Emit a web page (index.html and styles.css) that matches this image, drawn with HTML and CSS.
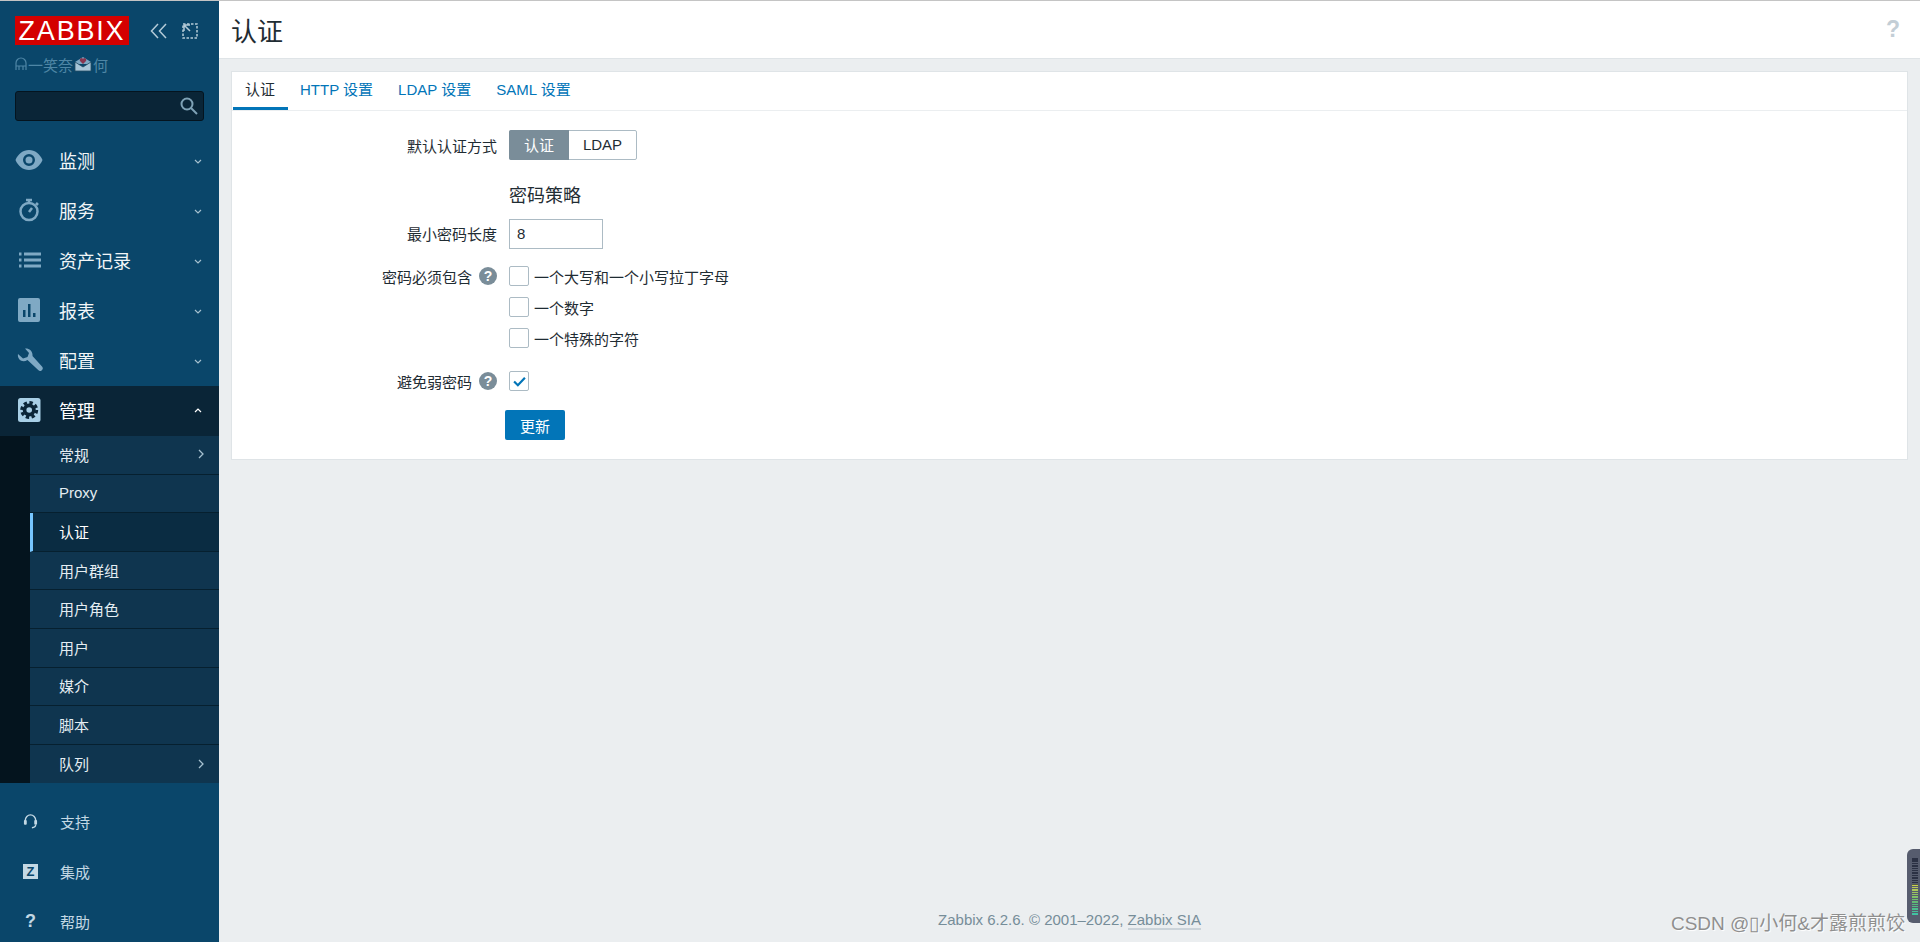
FILE: index.html
```html
<!DOCTYPE html>
<html lang="zh">

<head>
    <meta charset="utf-8">
    <title>认证</title>
    <link rel="stylesheet" href="styles.css">
</head>

<body>
    <div class="page">
        <aside class="sidebar">
            <div class="brand">
                <div class="logo">ZABBIX</div>
                <div class="brand-tools">
                    <svg class="tool" viewBox="0 0 18 16"><path d="M8 1 1.500 8 8 15M16 1 9.500 8 16 15" /></svg>
                    <svg class="tool" viewBox="0 0 16 16"><path class="dash" d="M1 1h14v14H1z" /><path class="solid" d="M2 2h6M2 2v6M2 2l6 6" /></svg>
                </div>
            </div>
            <div class="user">
                <svg class="user-mark" viewBox="0 0 12 14"><path d="M1 13V6a5 5 0 0 1 10 0v7M1 9h10M4 9v4M8 9v4" /></svg>一笑奈<svg class="user-mail" viewBox="0 0 18 16"><path class="flap" d="M1 6 9 1l8 5v2H1z" /><path class="body" d="M1 6l8 5 8-5v9H1z" /><path class="heart" d="M9 8 6 5a1.800 1.800 0 0 1 3-2 1.800 1.800 0 0 1 3 2z" /></svg>何
            </div>
            <div class="search">
                <svg class="search-icon" viewBox="0 0 18 18"><circle cx="7" cy="7" r="5.500" /><path d="M11 11l6 6" /></svg>
            </div>

            <nav class="menu">
                <a class="menu-item">
                    <svg class="menu-icon" viewBox="0 0 28 20"><path class="fill" fill-rule="evenodd" d="M14 0C8 0 3 4 .5 10 3 16 8 20 14 20s11-4 13.500-10C25 4 20 0 14 0zm0 4a6 6 0 1 1 0 12 6 6 0 0 1 0-12z" /><circle class="fill" cx="14" cy="10" r="3.500" /></svg>
                    <span>监测</span>
                    <svg class="chev" viewBox="0 0 8 6"><path d="M1 1l3 3 3-3" /></svg>
                </a>
                <a class="menu-item">
                    <svg class="menu-icon" viewBox="0 0 28 24"><circle class="line" cx="14" cy="13.500" r="8.500" /><path class="line" d="M11 2h6M14 2v3M21 5l2 2" /><path class="line" d="M14 14l3-4" /></svg>
                    <span>服务</span>
                    <svg class="chev" viewBox="0 0 8 6"><path d="M1 1l3 3 3-3" /></svg>
                </a>
                <a class="menu-item">
                    <svg class="menu-icon" viewBox="0 0 28 20"><path class="line thick" d="M4 4h2.500M9 4h17M4 10h2.500M9 10h17M4 16h2.500M9 16h17" /></svg>
                    <span>资产记录</span>
                    <svg class="chev" viewBox="0 0 8 6"><path d="M1 1l3 3 3-3" /></svg>
                </a>
                <a class="menu-item">
                    <svg class="menu-icon" viewBox="0 0 28 24"><path class="fill" fill-rule="evenodd" d="M5 0h18a2 2 0 0 1 2 2v20a2 2 0 0 1-2 2H5a2 2 0 0 1-2-2V2a2 2 0 0 1 2-2zm3 12v7h2.500v-7zm5-6v13h2.500V6zm5 9v4h2.500v-4z" /></svg>
                    <span>报表</span>
                    <svg class="chev" viewBox="0 0 8 6"><path d="M1 1l3 3 3-3" /></svg>
                </a>
                <a class="menu-item">
                    <svg class="menu-icon" viewBox="0 0 28 24"><path class="fill" d="M10 .5C14 0 18 3 17.500 8L27 18.500a2.500 2.500 0 0 1-3.800 3.500L12.500 12C7 15.500 2 11 3 6L8 10.500 12.500 9 14 5z" /></svg>
                    <span>配置</span>
                    <svg class="chev" viewBox="0 0 8 6"><path d="M1 1l3 3 3-3" /></svg>
                </a>
                <a class="menu-item is-open">
                    <svg class="menu-icon" viewBox="0 0 28 24"><rect class="fill" x="3" y="0" width="22.500" height="24" rx="2.500" /><circle class="gear" cx="14.200" cy="12" r="6.500" /><circle class="gear-teeth" cx="14.200" cy="12" r="7.500" /><circle class="fill" cx="14.200" cy="12" r="2.800" /></svg>
                    <span>管理</span>
                    <svg class="chev" viewBox="0 0 8 6"><path d="M1 5l3-3 3 3" /></svg>
                </a>
                <div class="submenu">
                    <ul class="sub-list">
                        <li class="sub-item"><span>常规</span><svg class="chev-side" viewBox="0 0 6 10"><path d="M1 1l4 4-4 4" /></svg></li>
                        <li class="sub-item">Proxy</li>
                        <li class="sub-item is-active">认证</li>
                        <li class="sub-item">用户群组</li>
                        <li class="sub-item">用户角色</li>
                        <li class="sub-item">用户</li>
                        <li class="sub-item">媒介</li>
                        <li class="sub-item">脚本</li>
                        <li class="sub-item"><span>队列</span><svg class="chev-side" viewBox="0 0 6 10"><path d="M1 1l4 4-4 4" /></svg></li>
                    </ul>
                </div>
            </nav>

            <div class="bottom-menu">
                <a class="bottom-item">
                    <svg class="bottom-icon" viewBox="0 0 16 18"><path d="M2.500 11V8a5.500 5.500 0 0 1 11 0v3" /><rect class="pad" x="1" y="8" width="3" height="5" rx="1" /><rect class="pad" x="12" y="8" width="3" height="5" rx="1" /><path d="M13.500 13c0 2-1.500 3-4 3.200" /></svg>
                    <span>支持</span>
                </a>
                <a class="bottom-item">
                    <span class="z-mark">Z</span>
                    <span>集成</span>
                </a>
                <a class="bottom-item">
                    <span class="help-mark">?</span>
                    <span>帮助</span>
                </a>
            </div>
        </aside>

        <main class="main">
            <header class="header">
                <h1 class="title">认证</h1>
                <span class="header-help">?</span>
            </header>

            <div class="content">
                <section class="card">
                    <div class="tabs">
                        <a class="tab is-current">认证</a>
                        <a class="tab">HTTP 设置</a>
                        <a class="tab">LDAP 设置</a>
                        <a class="tab">SAML 设置</a>
                    </div>

                    <form class="form">
                        <div class="row row-auth">
                            <label class="row-label">默认认证方式</label>
                            <div class="segmented">
                                <span class="seg seg-on">认证</span>
                                <span class="seg">LDAP</span>
                            </div>
                        </div>

                        <div class="row row-heading">
                            <div class="row-label"></div>
                            <h4 class="form-heading">密码策略</h4>
                        </div>

                        <div class="row row-length">
                            <label class="row-label">最小密码长度</label>
                            <div class="text-input">8</div>
                        </div>

                        <div class="row row-contains">
                            <label class="row-label">密码必须包含<span class="hint">?</span></label>
                            <div class="checks">
                                <div class="check"><span class="box"></span>一个大写和一个小写拉丁字母</div>
                                <div class="check"><span class="box"></span>一个数字</div>
                                <div class="check"><span class="box"></span>一个特殊的字符</div>
                            </div>
                        </div>

                        <div class="row row-weak">
                            <label class="row-label">避免弱密码<span class="hint">?</span></label>
                            <span class="box"><svg class="tick" viewBox="0 0 12 10"><path d="M1 5l3.500 3.500L11 1.500" /></svg></span>
                        </div>

                        <div class="row row-submit">
                            <div class="row-label"></div>
                            <button class="btn" type="button">更新</button>
                        </div>
                    </form>
                </section>
            </div>

            <footer class="footer">Zabbix 6.2.6. © 2001–2022, <a class="footer-link">Zabbix SIA</a></footer>
        </main>
    </div>

    <div class="meter"></div>
    <div class="watermark">CSDN @▯小何&amp;才露煎煎饺</div>
</body>

</html>
```

FILE: styles.css
```css
* {
    box-sizing: border-box;
}
html,
body {
    margin: 0;
    height: 100%;
    overflow: hidden;
}
body {
    font: 15px "Liberation Sans", "Noto Sans CJK SC", sans-serif;
    color: #1f2c33;
    background: #ebeef0;
}
.page {
    display: flex;
    height: 942px;
    border-top: 1px solid #c4c4c4;
}

/* sidebar */
.sidebar {
    display: flex;
    flex-direction: column;
    flex: none;
    width: 219px;
    overflow: hidden;
    background: #0a466a;
    color: #f2f6f8;
}
.sidebar > * {
    flex: none;
}
.brand {
    display: flex;
    align-items: center;
    padding: 15px 0 0 15px;
}
.logo {
    width: 114px;
    height: 29px;
    background: #d40000;
    color: #fff;
    font-size: 27px;
    line-height: 30px;
    letter-spacing: 1.800px;
    text-align: center;
}
.brand-tools {
    display: flex;
    gap: 13px;
    margin-left: 21px;
}
.tool {
    width: 18px;
    height: 16px;
    fill: none;
    stroke: #b4cbd8;
    stroke-width: 1.500;
}
.tool .dash {
    stroke-dasharray: 2.500 1.500;
}
.user {
    display: flex;
    align-items: center;
    height: 24px;
    margin-top: 7px;
    padding-left: 15px;
    color: #4f86a6;
}
.user-mark {
    width: 12px;
    height: 14px;
    margin-right: 1px;
    fill: none;
    stroke: #4f86a6;
    stroke-width: 1.200;
}
.user-mail {
    width: 18px;
    height: 16px;
    margin: 0 1px;
}
.user-mail .flap {
    fill: #7fa9c4;
}
.user-mail .body {
    fill: #a9c6d8;
    stroke: #234b63;
    stroke-width: .8;
}
.user-mail .heart {
    fill: #8a3650;
}
.search {
    position: relative;
    height: 30px;
    margin: 15px 15px 0;
    background: #0a2537;
    border: 1px solid #04141f;
    border-radius: 3px;
}
.search-icon {
    position: absolute;
    top: 5px;
    right: 5px;
    width: 18px;
    height: 18px;
    fill: none;
    stroke: #7fa2b6;
    stroke-width: 2;
}
.menu {
    display: flex;
    flex-direction: column;
    margin-top: 15px;
}
.menu-item {
    display: flex;
    align-items: center;
    flex: none;
    height: 50px;
    padding: 0 0 2px 15px;
    font-size: 18px;
}
.menu-item span {
    flex: 1;
    margin-left: 16px;
}
.menu-icon {
    flex: none;
    width: 28px;
    height: 24px;
}
.menu-icon .fill {
    fill: #7fa9c4;
}
.menu-icon .line {
    fill: none;
    stroke: #7fa9c4;
    stroke-width: 2.500;
}
.menu-icon .thick {
    stroke-width: 3;
}
.chev {
    flex: none;
    width: 8px;
    height: 6px;
    margin: 3px 17px 0 0;
    fill: none;
    stroke: #a5c0cf;
    stroke-width: 1.200;
}
.menu-item.is-open {
    background: #0a2537;
    color: #fff;
}
.is-open .menu-icon .fill {
    fill: #a8cfe6;
}
.is-open .menu-icon .gear {
    fill: #0a2537;
}
.is-open .menu-icon .gear-teeth {
    fill: none;
    stroke: #0a2537;
    stroke-width: 3;
    stroke-dasharray: 3.400 2.490;
}
.is-open .chev {
    stroke: #fff;
    margin-top: 0;
}
.submenu {
    padding-left: 30px;
    background: #04141e;
}
.sub-list {
    margin: 0;
    padding: 0;
    list-style: none;
}
.sub-item {
    display: flex;
    align-items: center;
    justify-content: space-between;
    height: 38.600px;
    padding: 0 15px 1px 29px;
    background: #0f354f;
    border-bottom: 1px solid #06202f;
    color: #e4edf2;
}
.sub-item:last-child {
    border-bottom: 0;
}
.sub-item.is-active {
    padding-left: 26px;
    background: #0a2c42;
    border-left: 3px solid #76c6ff;
    color: #fff;
}
.chev-side {
    width: 6px;
    height: 10px;
    fill: none;
    stroke: #a5c0cf;
    stroke-width: 1.300;
}
.bottom-menu {
    display: flex;
    flex-direction: column;
    margin-top: 13px;
}
.bottom-item {
    display: flex;
    align-items: center;
    flex: none;
    height: 50px;
    padding-left: 23px;
    color: #c3d8e4;
}
.bottom-item > span:last-child {
    margin-left: 15px;
}
.bottom-icon {
    width: 15px;
    height: 18px;
    margin-right: 7px;
    fill: none;
    stroke: #c3d8e4;
    stroke-width: 1.500;
}
.bottom-icon .pad {
    fill: #c3d8e4;
    stroke: none;
}
.z-mark,
.help-mark {
    flex: none;
    width: 15px;
    margin-right: 7px;
    text-align: center;
    font-weight: bold;
}
.z-mark {
    height: 15px;
    background: #c3d8e4;
    color: #0a466a;
    font-size: 13px;
    line-height: 15px;
}
.help-mark {
    font-size: 18px;
}

/* main */
.main {
    display: flex;
    flex-direction: column;
    flex: 1;
    min-width: 0;
}
.header {
    display: flex;
    align-items: center;
    justify-content: space-between;
    flex: none;
    height: 58px;
    padding: 0 20px 0 12px;
    background: #fff;
    border-bottom: 1px solid #dfe4e7;
}
.title {
    margin: 0;
    font-size: 26px;
    font-weight: normal;
}
.header-help {
    color: #c3ced6;
    font-size: 23px;
    font-weight: bold;
}
.content {
    flex: 1;
    padding: 12px 12px 0;
}
.card {
    height: 389px;
    background: #fff;
    border: 1px solid #dfe4e7;
}
.tabs {
    display: flex;
    height: 39px;
    padding-left: .5px;
    border-bottom: 1px solid #ebeef0;
}
.tab {
    height: 38px;
    padding: 0 12.500px;
    color: #0275b8;
    line-height: 36px;
}
.tab.is-current {
    color: #1f2c33;
    border-bottom: 3px solid #0275b8;
}

/* form */
.form {
    display: flex;
    flex-direction: column;
}
.row {
    display: flex;
    align-items: flex-start;
    gap: 12px;
}
.row-label {
    display: flex;
    align-items: center;
    justify-content: flex-end;
    flex: none;
    width: 265px;
    height: 20px;
}
.row-auth {
    margin-top: 19px;
}
.row-auth .row-label {
    height: 30px;
}
.row-heading {
    margin-top: 24px;
}
.row-length {
    margin-top: 11px;
}
.row-length .row-label {
    height: 29px;
}
.row-contains {
    margin-top: 17px;
}
.row-weak {
    margin-top: 23px;
}
.row-submit {
    margin-top: 19px;
}
.segmented {
    display: flex;
    height: 30px;
    border: 1px solid #acbbc4;
    border-radius: 2px;
}
.seg {
    width: 67px;
    padding-top: 5px;
    text-align: center;
}
.seg-on {
    width: 60px;
    margin: -1px 0 -1px -1px;
    padding-top: 4px;
    background: #7a8d99;
    border-radius: 2px 0 0 2px;
    color: #fff;
}
.form-heading {
    margin: 0;
    font-size: 18px;
    font-weight: normal;
    line-height: 24px;
}
.text-input {
    width: 94px;
    height: 30px;
    padding: 5px 7px;
    border: 1px solid #acbbc4;
}
.hint {
    width: 18px;
    height: 18px;
    margin-left: 7px;
    background: #7a8d99;
    border-radius: 50%;
    color: #fff;
    font-size: 14px;
    font-weight: bold;
    line-height: 18px;
    text-align: center;
}
.checks {
    display: flex;
    flex-direction: column;
    gap: 11px;
}
.check {
    display: flex;
    align-items: center;
    gap: 5px;
    height: 20px;
}
.box {
    display: flex;
    align-items: center;
    justify-content: center;
    flex: none;
    width: 20px;
    height: 20px;
    background: #fff;
    border: 1px solid #acbbc4;
    border-radius: 2px;
}
.tick {
    width: 13px;
    height: 11px;
    fill: none;
    stroke: #0275b8;
    stroke-width: 2;
}
.btn {
    width: 60px;
    height: 30px;
    margin-left: -4px;
    padding: 0;
    background: #0275b8;
    border: 0;
    border-radius: 2px;
    color: #fff;
    font: inherit;
}
.footer {
    flex: none;
    height: 31px;
    color: #768d99;
    text-align: center;
}
.footer-link {
    border-bottom: 2px solid #cbd3d9;
}

/* browser overlays */
.meter {
    position: absolute;
    top: 849px;
    right: 0;
    width: 13px;
    height: 74px;
    background:
        repeating-linear-gradient(transparent 0 1.500px, #565c6e 1.500px 2.400px) 5px 9px / 6px 57px no-repeat,
        linear-gradient(#2b3144 46%, #c9cf4e 48%, #58b878 80%, #3fc4a6) 5px 9px / 6px 57px no-repeat,
        #565c6e;
    border-radius: 6px 0 0 6px;
}
.watermark {
    position: absolute;
    top: 908px;
    right: 15px;
    color: #8f8f8f;
    font-size: 19px;
    text-shadow: 1px 1px 1px #fff;
    white-space: nowrap;
}
```
